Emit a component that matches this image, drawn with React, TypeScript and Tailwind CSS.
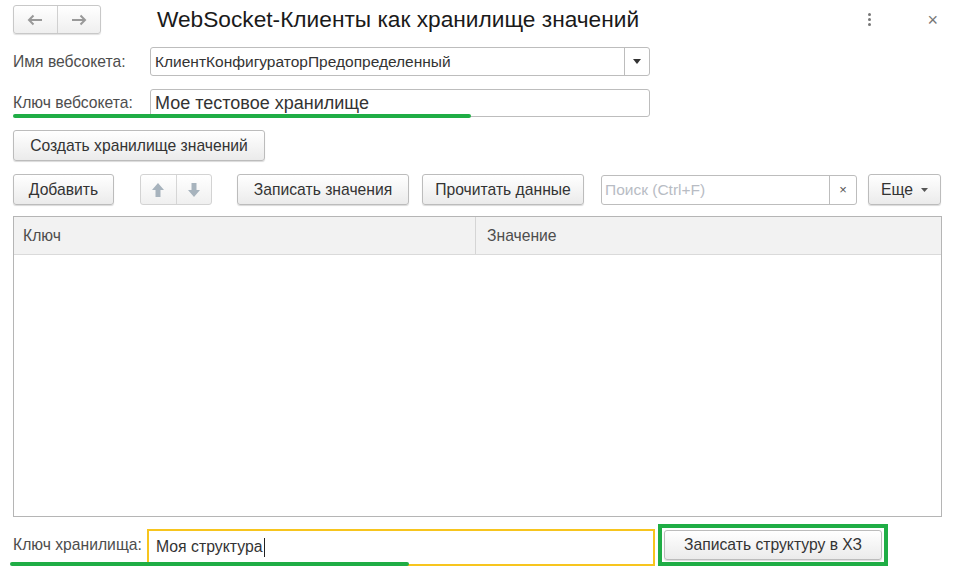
import React from 'react';

const btn =
  'h-[31px] px-[4px] whitespace-nowrap flex items-center justify-center rounded-[3px] border border-[#bcbcbc] bg-gradient-to-b from-white to-[#ebebeb] shadow-[0_1px_1px_rgba(0,0,0,0.15)] text-[15.7px] text-[#333]';

const ArrowIcon: React.FC<{ dir: 'up' | 'down' }> = ({ dir }) => (
  <svg width="14" height="16" viewBox="0 0 14 16" style={{ transform: dir === 'down' ? 'rotate(180deg)' : undefined }}>
    <path d="M7 1 L13 8 H9.5 V15 H4.5 V8 H1 Z" fill="#a7b3bd" />
  </svg>
);

const NavArrow: React.FC<{ dir: 'left' | 'right' }> = ({ dir }) => (
  <svg width="16" height="12" viewBox="0 0 16 12" style={{ transform: dir === 'right' ? 'scaleX(-1)' : undefined }}>
    <path d="M15 6 H2 M6.5 1.5 L2 6 L6.5 10.5" stroke="#999" strokeWidth="2" fill="none" />
  </svg>
);

const App: React.FC = () => {
  return (
    <div
      className="w-[959px] h-[574px] bg-white overflow-hidden text-[#444]"
      style={{ fontFamily: '"Liberation Sans", Arial, sans-serif' }}
    >
      {/* header */}
      <div className="flex items-center pt-[5px] h-[34px]">
        <div className="ml-[13px] flex h-[29px] w-[88px] rounded-[3px] border border-[#c8c8c8] bg-gradient-to-b from-white to-[#efefef] shadow-[0_1px_1px_rgba(0,0,0,0.12)]">
          <div className="flex-1 flex items-center justify-center border-r border-[#d0d0d0]">
            <NavArrow dir="left" />
          </div>
          <div className="flex-1 flex items-center justify-center">
            <NavArrow dir="right" />
          </div>
        </div>
        <div className="ml-[56px] text-[22.7px] text-[#1a1a1a] leading-none whitespace-nowrap">
          WebSocket-Клиенты как хранилище значений
        </div>
        <div className="ml-auto mr-[56px] flex flex-col gap-[2px]">
          <div className="w-[3px] h-[3px] rounded-full bg-[#777]" />
          <div className="w-[3px] h-[3px] rounded-full bg-[#777]" />
          <div className="w-[3px] h-[3px] rounded-full bg-[#777]" />
        </div>
        <div className="mr-[21px] text-[18px] text-[#777] leading-none">×</div>
      </div>

      {/* websocket name */}
      <div className="flex items-center mt-[13px] h-[29px]">
        <div className="ml-[13px] w-[137px] text-[15.7px] text-[#4d4d4d]">Имя вебсокета:</div>
        <div className="flex h-[29px] w-[500px] rounded-[3px] border border-[#bdbdbd] bg-white">
          <div className="flex-1 flex items-center px-[4px] text-[15.5px] text-[#333]">
            КлиентКонфигураторПредопределенный
          </div>
          <div className="w-[25px] flex items-center justify-center border-l border-[#bdbdbd]">
            <svg width="8" height="5" viewBox="0 0 8 5">
              <path d="M0 0 H8 L4 5 Z" fill="#333" />
            </svg>
          </div>
        </div>
      </div>

      {/* websocket key */}
      <div className="relative flex items-center mt-[13px] h-[28px]">
        <div className="ml-[13px] w-[137px] text-[15.7px] text-[#4d4d4d]">Ключ вебсокета:</div>
        <div className="flex items-center h-[28px] w-[500px] rounded-[3px] border border-[#bdbdbd] bg-white px-[4px] text-[18px] text-[#333]">
          Мое тестовое хранилище
        </div>
        <div className="absolute left-[13px] top-[25px] w-[458px] h-[4px] rounded-full bg-[#1fad45]" />
      </div>

      {/* create storage */}
      <div className="mt-[13px] ml-[13px] flex">
        <div className={`${btn} w-[252px]`}>Создать хранилище значений</div>
      </div>

      {/* toolbar */}
      <div className="mt-[13px] ml-[13px] flex items-center">
        <div className={`${btn} w-[101px]`}>Добавить</div>
        <div className="ml-[26px] flex h-[31px] w-[72px] rounded-[3px] border border-[#d3d3d3] bg-gradient-to-b from-white to-[#f0f0f0]">
          <div className="flex-1 flex items-center justify-center border-r border-[#d6d6d6]">
            <ArrowIcon dir="up" />
          </div>
          <div className="flex-1 flex items-center justify-center">
            <ArrowIcon dir="down" />
          </div>
        </div>
        <div className={`${btn} ml-[25px] w-[172px]`}>Записать значения</div>
        <div className={`${btn} ml-[13px] w-[162px]`}>Прочитать данные</div>
        <div className="ml-[17px] flex h-[30px] w-[256px] rounded-[3px] border border-[#bdbdbd] bg-white">
          <div className="flex-1 flex items-center px-[3px] text-[15.5px] text-[#b8bcc4] whitespace-nowrap">
            Поиск (Ctrl+F)
          </div>
          <div className="w-[27px] flex items-center justify-center border-l border-[#bdbdbd] text-[13px] text-[#555]">
            ×
          </div>
        </div>
        <div className={`${btn} ml-[11px] w-[73px] gap-[8px]`}>
          <span>Еще</span>
          <svg width="7" height="4" viewBox="0 0 7 4" className="shrink-0">
            <path d="M0 0 H7 L3.5 4 Z" fill="#555" />
          </svg>
        </div>
      </div>

      {/* table */}
      <div className="mt-[11px] ml-[13px] w-[929px] h-[301px] border border-[#b5b5b5] bg-white">
        <div className="flex h-[38px] bg-[#f2f2f2] border-b border-[#dadada]">
          <div className="w-[462px] flex items-center pl-[9px] border-r border-[#d5d5d5] text-[15.7px] text-[#4d4d4d]">
            Ключ
          </div>
          <div className="flex-1 flex items-center pl-[11px] text-[15.7px] text-[#4d4d4d]">Значение</div>
        </div>
      </div>

      {/* bottom row */}
      <div className="relative mt-[7px] flex items-center h-[42px]">
        <div className="ml-[13px] w-[134px] text-[15.7px] text-[#4d4d4d] whitespace-nowrap">Ключ хранилища:</div>
        <div className="mt-[4px] flex items-center h-[37px] w-[508px] border-2 border-[#f7c51e] bg-white px-[7px] text-[15.8px] text-[#333]">
          Моя структура
          <span className="ml-[1px] inline-block w-[1.5px] h-[19px] bg-[#222]" />
        </div>
        <div className="ml-[3px] flex items-center justify-center h-[42px] w-[230px] border-[4px] border-[#1fad45] p-[2px]">
          <div className={`${btn} w-full h-full`}>Записать структуру в ХЗ</div>
        </div>
        <div className="absolute left-[10px] top-[38px] w-[399px] h-[4px] rounded-full bg-[#1fad45]" />
      </div>
    </div>
  );
};

export default App;
